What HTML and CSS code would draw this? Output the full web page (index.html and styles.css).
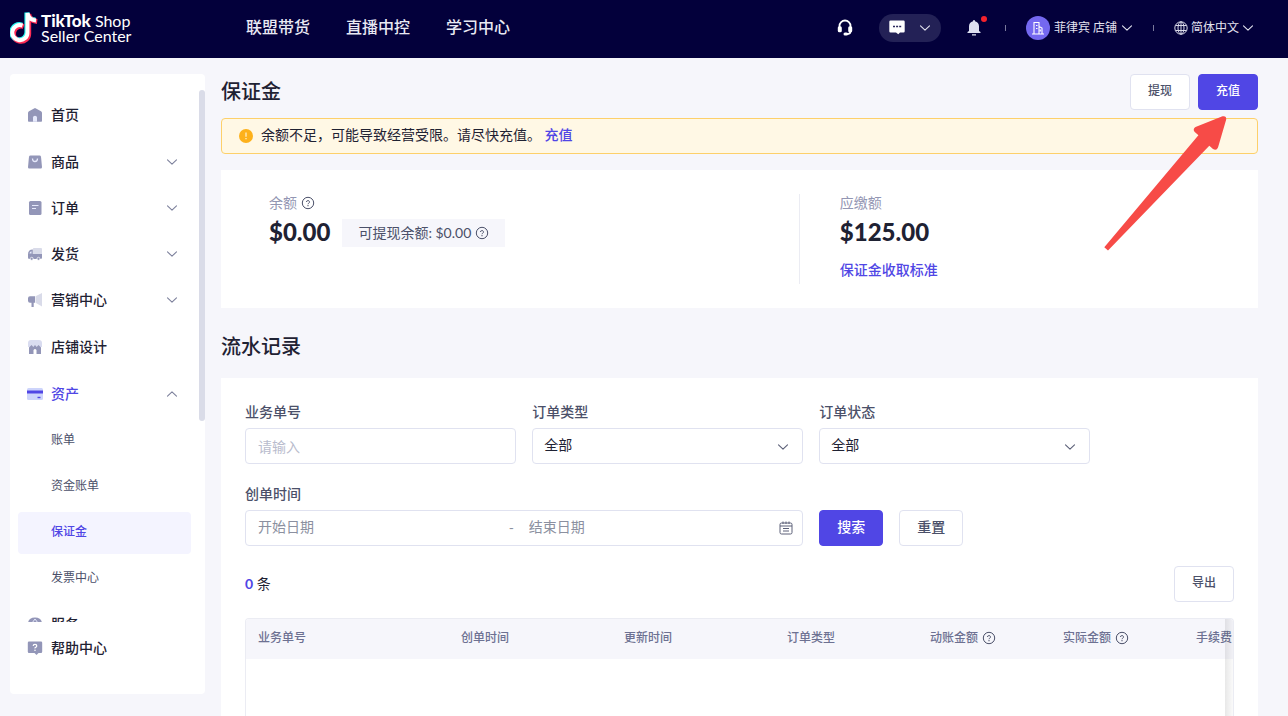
FILE: index.html
```html
<!DOCTYPE html>
<html lang="zh-CN">
<head>
<meta charset="utf-8">
<meta name="viewport" content="width=device-width, initial-scale=1">
<title>保证金 - TikTok Shop Seller Center</title>
<link rel="stylesheet" href="styles.css">
</head>
<body>
<svg class="sprite" aria-hidden="true">
  <symbol id="chevron" viewBox="0 0 12 12"><path d="M1.500 3.800 6 8.200l4.500-4.400" fill="none" stroke="currentColor" stroke-width="1.100" stroke-linecap="round" stroke-linejoin="round"/></symbol>
  <symbol id="help" viewBox="0 0 14 14"><circle cx="7" cy="7" r="5.700" fill="none" stroke="currentColor"/><path d="M5.500 6a1.500 1.400 0 1 1 2.200 1.200c-.5.300-.7.500-.7 1" fill="none" stroke="currentColor"/><circle cx="7" cy="9.700" r=".65" fill="currentColor"/></symbol>
</svg>

<header class="topbar">
  <a class="logo" href="#" aria-label="TikTok Shop Seller Center">
    <svg class="logo-mark" viewBox="0 0 30 34" aria-hidden="true">
      <g fill="none" stroke-width="5">
        <path d="M12.500 14.500a7.600 7.600 0 1 0 5 7.200V2c.5 4.500 3.500 7 8.500 7.500" stroke="#25f4ee" transform="translate(-.6 -.5)"/>
        <path d="M12.500 14.500a7.600 7.600 0 1 0 5 7.200V2c.5 4.500 3.500 7 8.500 7.500" stroke="#fe2c55" transform="translate(1.200 1)"/>
        <path d="M12.500 14.500a7.600 7.600 0 1 0 5 7.200V2c.5 4.500 3.500 7 8.500 7.500" stroke="#fff" stroke-width="4"/>
      </g>
    </svg>
    <span class="logo-text"><span><b>TikTok</b> Shop</span><span>Seller Center</span></span>
  </a>
  <nav class="topnav" aria-label="主导航">
    <a href="#">联盟带货</a><a href="#">直播中控</a><a href="#">学习中心</a>
  </nav>
  <div class="tools">
    <button class="tool" aria-label="客服"><svg width="16" height="18" viewBox="0 0 16 18"><path d="M2.500 9V7a5.500 5.500 0 0 1 11 0v5.500c0 1.500-1.500 2.500-3.500 2.500" fill="none" stroke="#fff" stroke-width="1.800"/><rect x=".8" y="7.300" width="4" height="6" rx="1.500" fill="#fff"/><rect x="11.200" y="7.300" width="4" height="6" rx="1.500" fill="#fff"/><rect x="6.500" y="13.500" width="4.500" height="3" rx="1.500" fill="#fff"/></svg></button>
    <button class="chat-pill" aria-label="消息"><svg width="16" height="15" viewBox="0 0 16 15"><path d="M1.500.5h13q1.200 0 1.200 1.200v9.600q0 1.200-1.200 1.200H11L9.300 14.300 7 12.500H1.500Q.3 12.500.3 11.300V1.700Q.3.500 1.500.500z" fill="#fff"/><path d="M4 6.500h2m1.100 0h2m1.100 0h2" stroke="#29275b" stroke-width="1.600"/></svg><svg class="chev"><use href="#chevron"/></svg></button>
    <button class="tool bell" aria-label="通知"><svg width="14" height="16" viewBox="0 0 14 16"><path d="M6 1.300V.3h2v1c2.500.5 4 2.400 4 5V11l1.500 1v1H.5v-1L2 11V6.300c0-2.600 1.500-4.500 4-5zM5 14.200h4v1.200H5z" fill="#dddff0"/></svg><span class="dot"></span></button>
    <span class="divider"></span>
    <button class="tool shop"><span class="avatar"><svg width="14" height="14" viewBox="0 0 14 14"><path d="M1 13h12M3 13V1.500h5V13M8 5.500l3 1.500v6M5 4.500h1.500M5 7.500h1.500M9.300 8.500v2" fill="none" stroke="#fff" stroke-width="1.100"/></svg></span>菲律宾 店铺<svg class="chev"><use href="#chevron"/></svg></button>
    <span class="divider"></span>
    <button class="tool lang"><svg width="14" height="14" viewBox="0 0 14 14"><g fill="none" stroke="#d9d9e8"><circle cx="7" cy="7" r="6.200"/><ellipse cx="7" cy="7" rx="3" ry="6.200"/><path d="M7 .8v12.400M1.500 4.500h11M1.500 9.500h11"/></g></svg>简体中文<svg class="chev"><use href="#chevron"/></svg></button>
  </div>
</header>

<div class="shell">
  <aside class="sidebar">
    <div class="menu-scroll">
      <nav class="menu" aria-label="侧边导航">
        <a class="item leaf" href="#"><svg class="ico" viewBox="0 0 16 16"><path d="M8 1 14 4.300q1 .6 1 1.600V14q0 .8-.8.8H1.800Q1 14.800 1 14V5.900q0-1 1-1.600z" fill="#9396b8"/><path d="M6 14.800V10.500q0-1.800 2-1.800t2 1.800v4.300z" fill="#e6e9fb"/></svg>首页</a>
        <button class="item"><svg class="ico" viewBox="0 0 16 16"><path d="M3.500 1.500h9q1.300 0 1.500 1.200L15 13q.1 1.500-1.300 1.500H2.300Q.9 14.500 1 13L2 2.700q.2-1.200 1.500-1.200z" fill="#9396b8"/><path d="M5.500 4.500q0 3 2.500 3t2.500-3" fill="none" stroke="#e6e9fb" stroke-width="1.300"/></svg>商品<svg class="chev"><use href="#chevron"/></svg></button>
        <button class="item"><svg class="ico" viewBox="0 0 16 16"><rect x="2" y="1" width="12.500" height="14" rx="1.500" fill="#9396b8"/><path d="M5 5.500h6.500M5 8.500h4" stroke="#e6e9fb" stroke-width="1.200"/></svg>订单<svg class="chev"><use href="#chevron"/></svg></button>
        <button class="item"><svg class="ico" viewBox="0 0 16 16"><path d="M7 2h7q1 0 1 1v5.500H5.800V3q0-1 1.200-1z" fill="#d9dbe9"/><path d="M5.800 3.500V8H15v3.500q0 1.500-1.500 1.500h-11Q1 13 1 11.500V8.500q0-5 4.800-5z" fill="#9396b8"/><path d="M2.500 7.500q0-2 2-2.300v2.300z" fill="#e6e9fb"/><circle cx="4.700" cy="12.800" r="1.500" fill="#9396b8" stroke="#fff" stroke-width=".7"/><circle cx="11.500" cy="12.800" r="1.500" fill="#9396b8" stroke="#fff" stroke-width=".7"/></svg>发货<svg class="chev"><use href="#chevron"/></svg></button>
        <button class="item"><svg class="ico" viewBox="0 0 16 16"><path d="M8.500 4.200 15 1v13.500l-6.500-3.700z" fill="#d9dbe9"/><path d="M3 4.200h5v6.600H6.700V15H4.500v-4.200H3Q1 10.800 1 8.800V6.200q0-2 2-2z" fill="#9396b8"/></svg>营销中心<svg class="chev"><use href="#chevron"/></svg></button>
        <a class="item leaf" href="#"><svg class="ico" viewBox="0 0 16 16"><path d="M4 1h8q3 0 3 3v4H1V4q0-3 3-3z" fill="#d9dcf0"/><path d="M2 15V8.500l2.500-2.500L6.300 8 8 6 9.700 8l1.800-2L14 8.500V15z" fill="#9396b8"/><path d="M6.500 15v-3.500q0-1.500 1.500-1.500t1.500 1.500V15z" fill="#fff"/></svg>店铺设计</a>
        <button class="item open" aria-expanded="true"><svg class="ico" viewBox="0 0 16 16"><rect y="2" width="16" height="12" rx="1.500" fill="#cdd4fb"/><path d="M0 4.500h16v3H0z" fill="#5046e5"/><path d="M10.500 11.500h3" stroke="#5046e5" stroke-width="1.400"/></svg>资产<svg class="chev"><use href="#chevron"/></svg></button>
        <a class="sub" href="#">账单</a>
        <a class="sub" href="#">资金账单</a>
        <a class="sub active" href="#" aria-current="page">保证金</a>
        <a class="sub" href="#">发票中心</a>
        <a class="item" href="#"><svg class="ico" viewBox="0 0 16 16"><path d="M1 8q0-6.500 7-6.500T15 8v5H1z" fill="#9396b8"/><path d="m5 7 3-4 3 4" fill="none" stroke="#e6e9fb"/></svg>服务</a>
      </nav>
      <span class="thumb"></span>
    </div>
    <div class="menu-foot">
      <a class="item" href="#"><svg class="ico" viewBox="0 0 16 16"><path d="M2 1.500h12q1.200 0 1.200 1.200v9q0 1.200-1.200 1.200h-2.500L9.500 15l-2-2.100H2Q.8 12.900.8 11.700v-9Q.8 1.500 2 1.500z" fill="#9396b8"/><path d="M6.200 6q0-1.700 1.800-1.700T9.800 6Q9.800 7 8 7.800v.7" fill="none" stroke="#fff" stroke-width="1.200"/><circle cx="8" cy="10.300" r=".8" fill="#fff"/></svg>帮助中心</a>
    </div>
  </aside>

  <main class="main">
    <div class="page-head">
      <h1>保证金</h1>
      <button class="btn small">提现</button>
      <button class="btn small primary">充值</button>
    </div>
    <div class="alert" role="alert">
      <svg width="14" height="14" viewBox="0 0 14 14" aria-hidden="true"><circle cx="7" cy="7" r="7" fill="#fdb11b"/><path d="M7 3.500v4.300M7 9v1.300" stroke="#fff4d6" stroke-width="1.200"/></svg>
      <p>余额不足，可能导致经营受限。请尽快充值。 <a href="#">充值</a></p>
    </div>

    <section class="balance">
      <div class="bal-col">
        <div class="bal-label">余额<svg class="help"><use href="#help"/></svg></div>
        <div class="bal-row"><strong>$0.00</strong><span class="chip">可提现余额: $0.00<svg class="help"><use href="#help"/></svg></span></div>
      </div>
      <div class="bal-col due">
        <div class="bal-label">应缴额</div>
        <div class="bal-row"><strong>$125.00</strong></div>
        <a href="#">保证金收取标准</a>
      </div>
    </section>

    <h2>流水记录</h2>
    <section class="records">
      <form class="filters">
        <div class="field"><label for="no">业务单号</label><input class="box" id="no" type="text" placeholder="请输入"></div>
        <div class="field"><label for="type">订单类型</label><div class="select"><select class="box" id="type"><option>全部</option></select><svg class="chev"><use href="#chevron"/></svg></div></div>
        <div class="field"><label for="state">订单状态</label><div class="select"><select class="box" id="state"><option>全部</option></select><svg class="chev"><use href="#chevron"/></svg></div></div>
        <div class="field wide"><label for="from">创单时间</label>
          <div class="box range"><input id="from" type="text" placeholder="开始日期"><span>-</span><input type="text" placeholder="结束日期" aria-label="结束日期"><svg width="14" height="14" viewBox="0 0 14 14" aria-hidden="true"><path d="M2.500 2h9q1.500 0 1.500 1.500v8q0 1.500-1.500 1.500h-9Q1 13 1 11.500v-8Q1 2 2.500 2zM1 5h12M4 .5V3M10 .5V3M7 .5V3M4 7.500h6M4 10h6" fill="none" stroke="#5c6078"/></svg></div>
        </div>
        <div class="actions"><button class="btn primary" type="button">搜索</button><button class="btn" type="reset">重置</button></div>
      </form>
      <div class="count-row"><p><b>0</b> 条</p><button class="btn small">导出</button></div>
      <div class="table-wrap">
        <table>
          <colgroup><col class="c-no"><col class="c-time"><col class="c-time"><col class="c-type"><col class="c-amt"><col class="c-amt"><col class="c-time"></colgroup>
          <thead><tr><th>业务单号</th><th>创单时间</th><th>更新时间</th><th>订单类型</th><th>动账金额<svg class="help"><use href="#help"/></svg></th><th>实际金额<svg class="help"><use href="#help"/></svg></th><th>手续费</th></tr></thead>
        </table>
      </div>
    </section>

    <svg class="pointer" viewBox="0 0 130 145" aria-hidden="true"><path d="M122.500 6.300Q126.500 5.500 126.200 9.500L118 37.500Q116.500 41 113 39L109.300 35.700 8 140.400 4.300 137.200 98.400 25.300 94.500 21.800Q92.500 19 95.500 17z" fill="#f74b47"/></svg>
  </main>
</div>
</body>
</html>
```

FILE: styles.css
```css
* { box-sizing: border-box; }
body {
  margin: 0;
  height: 100vh;
  display: flex;
  flex-direction: column;
  overflow: hidden;
  background: #f6f6fb;
  color: #1f2233;
  font: 14px/20px Lato, "Noto Sans CJK SC", sans-serif;
}
a { color: inherit; text-decoration: none; }
button, input, select { font: inherit; color: inherit; margin: 0; }
button { border: 0; padding: 0; background: none; cursor: pointer; }
p { margin: 0; }
svg { flex: none; }
.sprite { position: absolute; width: 0; height: 0; }
.chev { width: 12px; height: 12px; }
.help { width: 14px; height: 14px; color: #4b5069; }

.topbar {
  flex: none;
  height: 58px;
  padding: 0 34px 3px 10px;
  display: flex;
  align-items: center;
  background: #03003b;
  color: #fff;
}
.logo { display: flex; align-items: center; gap: 1px; width: 236px; }
.logo-mark { width: 30px; height: 34px; }
.logo-text { display: flex; flex-direction: column; font-size: 16px; line-height: 15px; white-space: nowrap; }
.logo-text b { font-size: 17px; font-weight: 900; }
.topnav { display: flex; gap: 36px; padding-bottom: 2px; font-size: 16px; font-weight: 500; white-space: nowrap; color: #e9e9f3; }
.tools { margin-left: auto; display: flex; align-items: center; font-size: 12px; color: #e3e3ef; }
.tool { display: flex; align-items: center; gap: 4px; white-space: nowrap; }
.lang { gap: 3px; }
.chat-pill {
  margin: 0 26px;
  width: 62px;
  height: 28px;
  border-radius: 14px;
  display: flex;
  align-items: center;
  justify-content: center;
  gap: 14px;
  background: #232156;
}
.bell { position: relative; }
.dot { position: absolute; top: -4px; right: -6px; width: 6px; height: 6px; border-radius: 50%; background: #f5222d; }
.divider { width: 1px; height: 6px; margin: 0 20px; background: #7a7a9c; }
.bell + .divider { margin-left: 24px; }
.avatar { width: 24px; height: 24px; border-radius: 50%; display: grid; place-items: center; background: #7468f0; }

.shell { flex: 1; min-height: 0; display: flex; gap: 16px; padding: 16px 30px 0 10px; }
.sidebar {
  flex: none;
  width: 195px;
  margin-bottom: 22px;
  display: flex;
  flex-direction: column;
  border-radius: 4px;
  background: #fff;
  overflow: hidden;
}
.menu-scroll { flex: 1; min-height: 0; position: relative; overflow: hidden; }
.menu { padding: 16px 14px 0 8px; display: flex; flex-direction: column; }
.thumb { position: absolute; top: 16px; right: 0; width: 6px; height: 331px; border-radius: 3px; background: #dadce8; }
.item, .sub {
  flex: none;
  height: 42px;
  margin-top: 4px;
  padding: 0 13px 2px 9px;
  display: flex;
  align-items: center;
  border-radius: 4px;
  text-align: left;
}
.item { gap: 8px; font-weight: 500; }
.leaf { height: 44px; }
.ico { width: 16px; height: 16px; }
.item .chev { margin-left: auto; color: #7d819c; }
.open { color: #5046e5; }
.open .chev { transform: rotate(180deg); }
.sub { padding-left: 33px; font-size: 12px; color: #4b5069; }
.active { background: #f4f4ff; color: #5046e5; font-weight: 500; }
.menu-foot { flex: none; height: 72px; padding: 2px 14px 0 8px; }

.main { flex: 1; min-width: 0; position: relative; display: flex; flex-direction: column; }
.page-head { flex: none; display: flex; gap: 8px; }
h1, h2 { margin: 0; font-size: 20px; line-height: 28px; font-weight: 500; }
h1 { flex: 1; padding-top: 3px; }
h2 { flex: none; padding: 24px 0 18px; }
.btn {
  width: 64px;
  height: 36px;
  padding-bottom: 2px;
  border: 1px solid #e0e2f0;
  border-radius: 4px;
  background: #fff;
  color: #4b5069;
  font-weight: 500;
}
.small { width: 60px; font-size: 12px; }
.primary { background: #5046e5; border-color: #5046e5; color: #fff; }
.alert {
  flex: none;
  margin: 8px 0 16px;
  height: 36px;
  padding: 0 17px;
  display: flex;
  align-items: center;
  gap: 8px;
  border: 1px solid #fdd06a;
  border-radius: 4px;
  background: #fff8e5;
}
.alert p { padding-bottom: 2px; }
.alert a, .due a { color: #5046e5; font-weight: 500; }

.balance {
  flex: none;
  padding: 24px;
  display: grid;
  grid-template-columns: 56fr 44fr;
  background: #fff;
}
.bal-col { min-height: 90px; padding: 0 24px; }
.due { padding-left: 40px; border-left: 1px solid #ebecf3; }
.bal-label { display: flex; align-items: center; gap: 4px; height: 18px; color: #9396b3; }
.bal-row { display: flex; align-items: center; gap: 12px; height: 30px; margin: 6px 0 12px; }
.bal-row strong { padding-bottom: 2px; font-size: 24px; font-weight: 900; }
.chip { height: 28px; padding: 0 16px; display: flex; align-items: center; gap: 4px; background: #f6f6fb; color: #4b5069; }

.records { flex: 1; min-height: 0; padding: 24px 24px 0; display: flex; flex-direction: column; background: #fff; }
.filters { flex: none; display: grid; grid-template-columns: repeat(7, 1fr); gap: 20px 16px; }
.field { grid-column: span 2; display: flex; flex-direction: column; gap: 6px; }
.field:nth-child(3) { grid-column: 5 / span 3; padding-right: calc((100% - 32px) / 3 + 16px); }
.wide { grid-column: 1 / span 4; }
.field label { color: #4b5069; font-weight: 500; }
.box {
  width: 100%;
  height: 36px;
  padding: 0 12px;
  border: 1px solid #e0e2f0;
  border-radius: 4px;
  background: #fff;
  outline: 0;
}
.box::placeholder { color: #b9bccd; opacity: 1; }
.select { display: grid; align-items: center; }
.select > * { grid-area: 1 / 1; }
.select select { appearance: none; padding: 0 11px 2px; }
.select .chev { justify-self: end; margin: 2px 14px 0 0; color: #5c6078; pointer-events: none; }
.range { display: flex; align-items: center; padding: 0 9px 0 12px; color: #8b90a0; }
.range input { flex: 1; min-width: 0; border: 0; padding: 0 0 2px; background: none; outline: 0; }
.range input::placeholder { color: #8b90a0; opacity: 1; }
.range span { width: 20px; }
.actions { grid-column: 5 / span 3; align-self: end; display: flex; gap: 16px; }
.count-row { flex: none; margin: 20px 0 16px; display: flex; align-items: center; justify-content: space-between; }
.count-row b { color: #5046e5; }
.table-wrap {
  flex: 1;
  min-height: 0;
  position: relative;
  overflow: hidden;
  border: 1px solid #ebecf3;
  border-bottom: 0;
  border-radius: 4px 4px 0 0;
}
.table-wrap::after {
  content: "";
  position: absolute;
  inset: 0 0 0 auto;
  width: 8px;
  background: linear-gradient(to right, rgba(0, 0, 0, .09), rgba(0, 0, 0, .02));
}
table { width: 1100px; table-layout: fixed; border-collapse: collapse; }
.c-no { width: 203px; }
.c-time { width: 163px; }
.c-type { width: 143px; }
.c-amt { width: 133px; }
th { height: 40px; padding: 0 12px 2px; background: #f6f6fb; color: #6d7192; font-size: 12px; font-weight: 500; text-align: left; white-space: nowrap; }
th .help { margin-left: 4px; vertical-align: -3px; }

.pointer { position: absolute; top: 36px; right: 28px; width: 130px; height: 145px; pointer-events: none; }
```
